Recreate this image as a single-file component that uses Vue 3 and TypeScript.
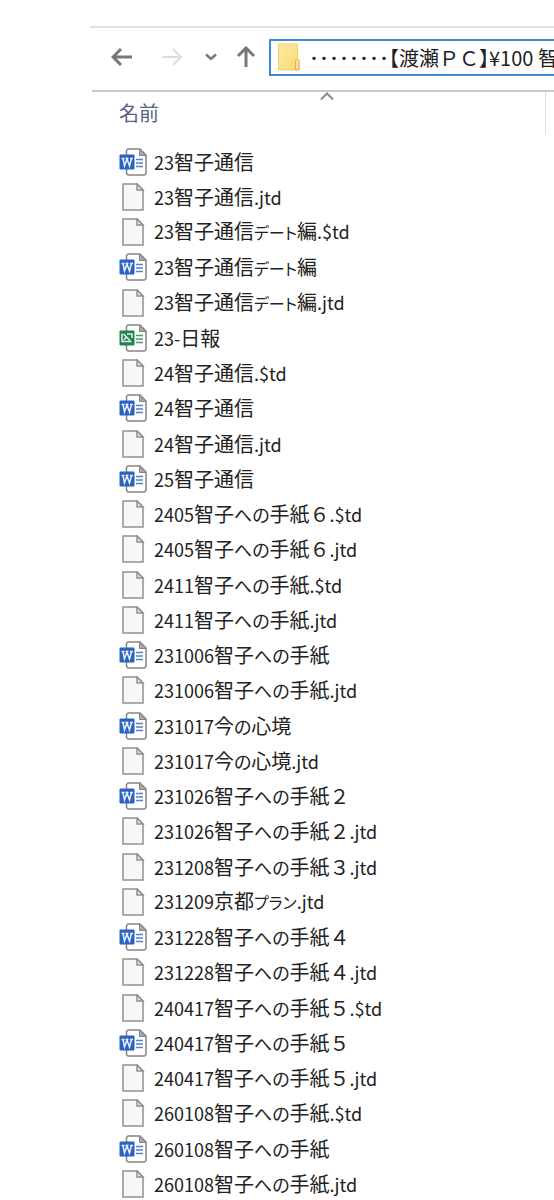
<script setup lang="ts">
import { ref } from 'vue'

type Kind = 'word' | 'excel' | 'plain'
type Script = 'latin' | 'hiragana' | 'katakana' | 'kanji'

interface FileEntry {
  name: string
  kind: Kind
}

interface Run {
  text: string
  script: Script
}

const path = ref('････････【渡瀬ＰＣ】¥100 智子')

const files: FileEntry[] = [
  { name: '23智子通信', kind: 'word' },
  { name: '23智子通信.jtd', kind: 'plain' },
  { name: '23智子通信デート編.$td', kind: 'plain' },
  { name: '23智子通信デート編', kind: 'word' },
  { name: '23智子通信デート編.jtd', kind: 'plain' },
  { name: '23-日報', kind: 'excel' },
  { name: '24智子通信.$td', kind: 'plain' },
  { name: '24智子通信', kind: 'word' },
  { name: '24智子通信.jtd', kind: 'plain' },
  { name: '25智子通信', kind: 'word' },
  { name: '2405智子への手紙６.$td', kind: 'plain' },
  { name: '2405智子への手紙６.jtd', kind: 'plain' },
  { name: '2411智子への手紙.$td', kind: 'plain' },
  { name: '2411智子への手紙.jtd', kind: 'plain' },
  { name: '231006智子への手紙', kind: 'word' },
  { name: '231006智子への手紙.jtd', kind: 'plain' },
  { name: '231017今の心境', kind: 'word' },
  { name: '231017今の心境.jtd', kind: 'plain' },
  { name: '231026智子への手紙２', kind: 'word' },
  { name: '231026智子への手紙２.jtd', kind: 'plain' },
  { name: '231208智子への手紙３.jtd', kind: 'plain' },
  { name: '231209京都プラン.jtd', kind: 'plain' },
  { name: '231228智子への手紙４', kind: 'word' },
  { name: '231228智子への手紙４.jtd', kind: 'plain' },
  { name: '240417智子への手紙５.$td', kind: 'plain' },
  { name: '240417智子への手紙５', kind: 'word' },
  { name: '240417智子への手紙５.jtd', kind: 'plain' },
  { name: '260108智子への手紙.$td', kind: 'plain' },
  { name: '260108智子への手紙', kind: 'word' },
  { name: '260108智子への手紙.jtd', kind: 'plain' },
]

function scriptOf(text: string): Script {
  if (/^[\x20-\x7e]/.test(text)) return 'latin'
  if (/^[\u3040-\u309f]/.test(text)) return 'hiragana'
  if (/^[\u30a0-\u30ff]/.test(text)) return 'katakana'
  return 'kanji'
}

// Latin, kana and kanji are set at different sizes in a file name.
function runs(name: string): Run[] {
  const parts =
    name.match(/[\x20-\x7e]+|[\u3040-\u309f]+|[\u30a0-\u30ff]+|[^\x20-\x7e\u3040-\u30ff]+/g) ?? []
  return parts.map((text) => ({ text, script: scriptOf(text) }))
}
</script>

<template>
  <main class="explorer">
    <nav class="toolbar" aria-label="ナビゲーション">
      <button class="nav back" type="button" aria-label="戻る">
        <svg width="22" height="20" viewBox="0 0 22 20"><path d="M21 10H2M10 2L2 10l8 8" /></svg>
      </button>
      <button class="nav forward" type="button" aria-label="進む" disabled>
        <svg width="22" height="20" viewBox="0 0 22 20"><path d="M1 10h19M12 2l8 8-8 8" /></svg>
      </button>
      <button class="nav recent" type="button" aria-label="最近表示した場所">
        <svg width="12" height="8" viewBox="0 0 12 8"><path d="M1 1.5l5 4.5 5-4.5" /></svg>
      </button>
      <button class="nav up" type="button" aria-label="上へ">
        <svg width="20" height="22" viewBox="0 0 20 22"><path d="M10 21V2M2 10l8-8 8 8" /></svg>
      </button>
      <div class="address">
        <svg class="folder" width="24" height="28" viewBox="0 0 24 28" aria-hidden="true">
          <defs>
            <linearGradient id="folder-face" x1="0" y1="0" x2="1" y2="1">
              <stop offset="0" stop-color="#ffe9a0" />
              <stop offset="1" stop-color="#f9d978" />
            </linearGradient>
          </defs>
          <path d="M1.5 1h19v15l1.5 1.5V27H1.5z" fill="url(#folder-face)" stroke="#efcf68" />
          <path d="M18.5 27v-9.5l2-1.5 1.5 1.5V27z" fill="#fde391" stroke="#dcb64c" />
        </svg>
        <input v-model="path" class="path" type="text" aria-label="アドレス" spellcheck="false" />
      </div>
    </nav>

    <section class="listing">
      <header class="columns">
        <button class="column" type="button">
          <svg class="sort" width="16" height="9" viewBox="0 0 16 9" aria-hidden="true">
            <path d="M2 7.5l6-6 6 6" />
          </svg>
          名前
        </button>
      </header>
      <ul class="files">
        <li v-for="file in files" :key="file.name + file.kind" class="file">
          <svg v-if="file.kind === 'plain'" class="icon" width="28" height="28" viewBox="0 0 28 28" aria-hidden="true">
            <path d="M4 1h14l6 6v20H4z" fill="#f5f7f9" stroke="#919191" stroke-width="1.5" />
            <path d="M18 1v6h6z" fill="#e4e4e4" stroke="#919191" stroke-width="1.5" />
          </svg>
          <svg v-else class="icon" :class="file.kind" width="28" height="28" viewBox="0 0 28 28" aria-hidden="true">
            <path d="M9 1h12l6 6v18.500L25.500 27H9L7.500 25.500v-23z" fill="#fff" stroke="#858585" stroke-width="1.5" />
            <path d="M20.500 1v6.500H27z" fill="#aaa" stroke="#858585" />
            <path class="lines" d="M17 11.500h7M17 15h7M17 18.500h7" />
            <path class="badge" d="M1 7h14v14H1z" />
            <path v-if="file.kind === 'word'" class="mark" d="M2.500 10.500h3M6.500 10.500h3M11 10.500h3M4 10.500l1.500 7.500L8 11l2.500 7L12.500 10.500" />
            <path v-else class="mark" d="M3 9.500v8h9.500M4.500 10l6.500 6.500M8 10h5v4M5 16l2-2.500" />
          </svg>
          <span class="name"><span v-for="(run, i) in runs(file.name)" :key="i" :class="run.script">{{ run.text }}</span></span>
        </li>
      </ul>
    </section>
  </main>
</template>

<style>
body {
  margin: 0;
  background: #fff;
}
</style>

<style scoped>
.explorer {
  box-sizing: border-box;
  padding: 26px 0 0 90px;
  color: #222;
  font-family: "Noto Sans CJK JP", "Noto Sans", sans-serif;
  font-size: 20px;
  overflow: hidden;
}

.toolbar {
  display: flex;
  align-items: center;
  height: 58px;
  padding: 0 0 4px 21px;
  border-top: 2px solid #e2e2e2;
}

button {
  padding: 0;
  border: 0;
  background: none;
  color: inherit;
  font: inherit;
}

.nav {
  display: flex;
  flex: none;
  color: #777;
}

.nav svg,
.sort {
  fill: none;
  stroke: currentColor;
  stroke-width: 3;
}

.forward {
  margin-left: 28px;
  color: #dcdcdc;
}

.forward svg {
  stroke-width: 2;
}

.recent {
  margin-left: 22px;
}

.recent svg {
  stroke-width: 2.4;
}

.up {
  margin-left: 19px;
}

.address {
  display: flex;
  flex: 1;
  align-items: center;
  box-sizing: border-box;
  min-width: 0;
  height: 37px;
  margin-left: 13px;
  padding-left: 6px;
  border: 2px solid #3c8ad2;
  border-right: 0;
}

.folder {
  flex: none;
}

.path {
  flex: 1;
  min-width: 0;
  height: 32px;
  margin-left: 8px;
  padding: 0;
  border: 0;
  outline: 0;
  background: none;
  color: #222;
  font: inherit;
  font-feature-settings: "halt";
}

.listing {
  margin-left: 2px;
  border-top: 2px solid #c8c8c8;
}

.columns {
  display: flex;
  height: 42px;
  padding-right: 8px;
}

.column {
  position: relative;
  flex: 1;
  padding-left: 27px;
  border-right: 1px solid #dedede;
  color: #54657f;
  line-height: 42px;
  text-align: left;
}

.sort {
  position: absolute;
  top: 0;
  left: 50%;
  color: #8c8c8c;
  stroke-width: 2;
}

.files {
  margin: 0;
  padding: 10px 0 0 27px;
  list-style: none;
}

.file {
  display: flex;
  align-items: center;
  gap: 7px;
  height: 35px;
}

.file:nth-child(4n) {
  height: 36px;
}

.icon {
  flex: none;
}

.word {
  color: #2b62c4;
}

.excel {
  color: #1e8449;
}

.lines {
  stroke: currentColor;
  stroke-width: 1.6;
  opacity: 0.8;
}

.badge {
  fill: currentColor;
  stroke: currentColor;
}

.mark {
  fill: none;
  stroke: #e6eefa;
  stroke-width: 1.5;
}

.name {
  line-height: 30px;
  white-space: nowrap;
}

.latin {
  font-size: 18px;
}

.hiragana {
  font-size: 18px;
  font-feature-settings: "palt";
}

.katakana {
  font-size: 16px;
  font-feature-settings: "palt";
}
</style>
